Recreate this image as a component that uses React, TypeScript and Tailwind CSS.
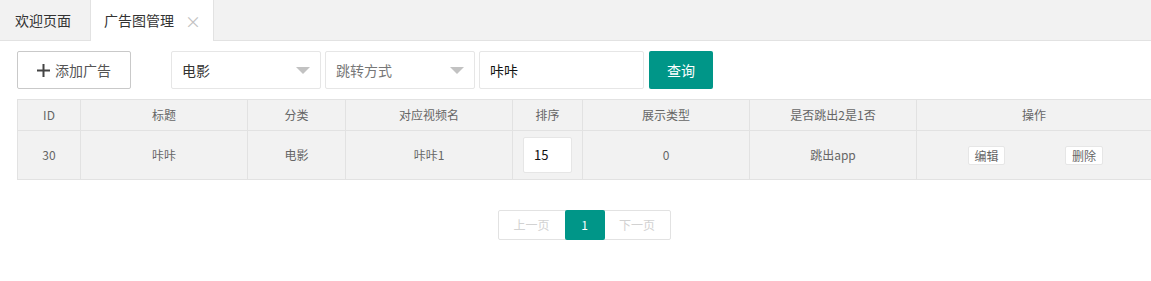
const cols = [
  { label: 'ID', w: 63 },
  { label: '标题', w: 167 },
  { label: '分类', w: 98 },
  { label: '对应视频名', w: 167 },
  { label: '排序', w: 70 },
  { label: '展示类型', w: 167 },
  { label: '是否跳出2是1否', w: 167 },
  { label: '操作', w: 235 },
]

function Caret() {
  return (
    <svg width="14" height="7" viewBox="0 0 14 7" className="shrink-0">
      <path d="M0 0 L14 0 L7 7 Z" fill="#c2c2c2" />
    </svg>
  )
}

export default function App() {
  return (
    <div
      className="w-[1151px] h-[281px] bg-white overflow-hidden text-[14px] text-[#333]"
      style={{ fontFamily: '"Noto Sans CJK SC", "Noto Sans", sans-serif' }}
    >
      {/* tab bar */}
      <div className="flex h-[41px] bg-[#f2f2f2] border-b border-[#e2e2e2]">
        <div className="flex items-center w-[90px] pl-[15px] text-[#333]">欢迎页面</div>
        <div className="flex items-center w-[124px] h-[41px] bg-white border-x border-[#e2e2e2] pl-[13px] text-[#333]">
          广告图管理
          <span className="ml-[11px] text-[#c2c2c2] text-[16px] leading-none">×</span>
        </div>
      </div>

      <div className="pl-[17px]">
        {/* toolbar */}
        <div className="flex items-center mt-[10px] h-[38px]">
          <button className="flex items-center justify-center gap-[5px] w-[114px] h-[38px] border border-[#c9c9c9] rounded-[2px] text-[#555] bg-white">
            <svg width="13" height="13" viewBox="0 0 13 13">
              <path d="M6.5 0 V13 M0 6.5 H13" stroke="#444" strokeWidth="2" />
            </svg>
            添加广告
          </button>
          <div className="flex items-center justify-between ml-[40px] w-[150px] h-[38px] border border-[#e6e6e6] rounded-[2px] pl-[10px] pr-[10px] text-[#333]">
            电影
            <Caret />
          </div>
          <div className="flex items-center justify-between ml-[4px] w-[150px] h-[38px] border border-[#e6e6e6] rounded-[2px] pl-[10px] pr-[10px] text-[#777]">
            跳转方式
            <Caret />
          </div>
          <div className="flex items-center ml-[4px] w-[165px] h-[38px] border border-[#e6e6e6] rounded-[2px] pl-[10px] text-[#111]">
            咔咔
          </div>
          <button className="ml-[5px] w-[64px] h-[38px] bg-[#009688] text-white rounded-[2px]">查询</button>
        </div>

        {/* table */}
        <table className="mt-[10px] border-collapse table-fixed text-[12px] text-[#666]" style={{ width: 1135 }}>
          <colgroup>
            {cols.map((c) => (
              <col key={c.label} style={{ width: c.w }} />
            ))}
          </colgroup>
          <thead>
            <tr className="h-[31px] bg-[#f2f2f2]">
              {cols.map((c) => (
                <th key={c.label} className="border border-[#e2e2e2] font-normal text-center">
                  {c.label}
                </th>
              ))}
            </tr>
          </thead>
          <tbody>
            <tr className="h-[49px] bg-[#f2f2f2] text-center">
              <td className="border border-[#e2e2e2]">30</td>
              <td className="border border-[#e2e2e2]">咔咔</td>
              <td className="border border-[#e2e2e2]">电影</td>
              <td className="border border-[#e2e2e2]">咔咔1</td>
              <td className="border border-[#e2e2e2]">
                <div className="mx-auto w-[49px] h-[36px] bg-white border border-[#e6e6e6] rounded-[2px] flex items-center pl-[10px] text-[13px] text-[#111]">
                  15
                </div>
              </td>
              <td className="border border-[#e2e2e2]">0</td>
              <td className="border border-[#e2e2e2]">跳出app</td>
              <td className="border border-[#e2e2e2]">
                <div className="flex items-center pl-[51px]">
                  <span className="w-[37px] h-[19px] leading-[17px] bg-white border border-[#e6e6e6] rounded-[2px]">编辑</span>
                  <span className="ml-[60px] w-[38px] h-[19px] leading-[17px] bg-white border border-[#e6e6e6] rounded-[2px]">删除</span>
                </div>
              </td>
            </tr>
          </tbody>
        </table>

        {/* pagination */}
        <div className="flex justify-center mt-[30px] text-[12px]">
          <div className="flex h-[30px] border border-[#e2e2e2] rounded-[2px]">
            <span className="flex items-center justify-center w-[66px] text-[#d2d2d2]">上一页</span>
            <span className="flex items-center justify-center w-[40px] bg-[#009688] text-white rounded-[2px] -my-px">1</span>
            <span className="flex items-center justify-center w-[65px] text-[#d2d2d2]">下一页</span>
          </div>
        </div>
      </div>
    </div>
  )
}
